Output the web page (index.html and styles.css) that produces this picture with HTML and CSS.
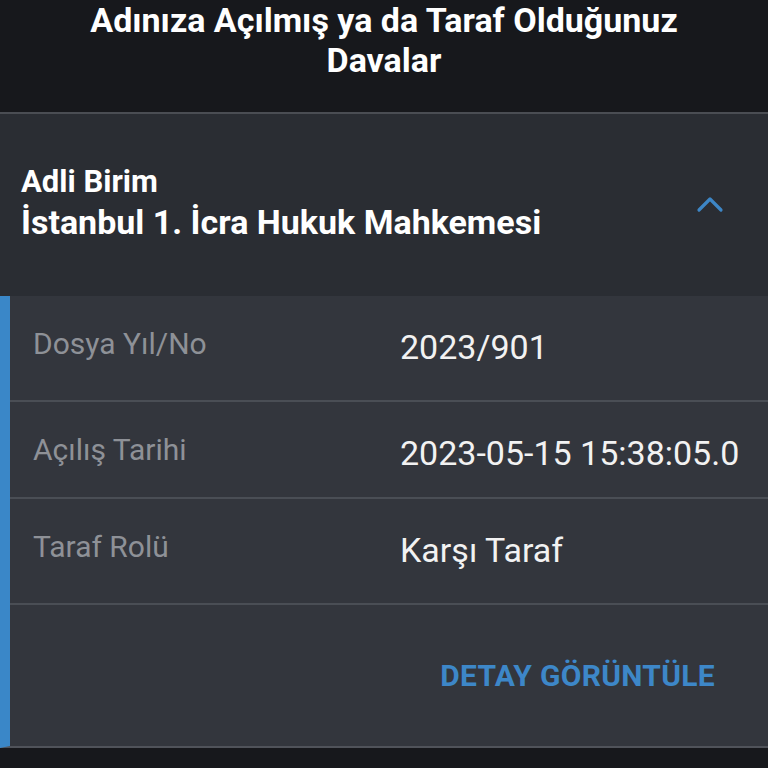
FILE: index.html
```html
<!DOCTYPE html>
<html lang="tr">
<head>
<meta charset="utf-8">
<link rel="stylesheet" href="styles.css">
</head>
<body>
<header class="topbar">
  <h1 class="title">Adınıza Açılmış ya da Taraf Olduğunuz Davalar</h1>
</header>
<section class="card">
  <div class="card-head">
    <div class="unit">
      <div class="unit-label">Adli Birim</div>
      <div class="unit-name">İstanbul 1. İcra Hukuk Mahkemesi</div>
    </div>
    <svg class="chevron" width="28" height="18" viewBox="0 0 28 18"><path d="M3 15 L14 4 L25 15" fill="none" stroke="#3d86c6" stroke-width="3.2" stroke-linecap="round" stroke-linejoin="round"/></svg>
  </div>
  <div class="card-body">
    <div class="row row-a">
      <div class="label">Dosya Yıl/No</div>
      <div class="value">2023/901</div>
    </div>
    <div class="row row-b">
      <div class="label">Açılış Tarihi</div>
      <div class="value">2023-05-15 15:38:05.0</div>
    </div>
    <div class="row row-a">
      <div class="label">Taraf Rolü</div>
      <div class="value">Karşı Taraf</div>
    </div>
    <div class="actions">
      <span class="action">DETAY GÖRÜNTÜLE</span>
    </div>
  </div>
</section>
</body>
</html>
```

FILE: styles.css
```css
html, body {
  margin: 0;
  padding: 0;
  background: #17181c;
  font-family: Roboto, "Noto Sans", "Liberation Sans", sans-serif;
  width: 768px;
  height: 768px;
  overflow: hidden;
}
.topbar {
  height: 112px;
  background: #17181c;
  display: flex;
  justify-content: center;
}
.title {
  margin: 0;
  width: 680px;
  text-align: center;
  color: #ffffff;
  font-size: 34px;
  font-weight: 700;
  line-height: 40px;
}
.card {
  border-top: 2px solid #4a4d53;
  background: #2a2d33;
}
.card-head {
  height: 182px;
  box-sizing: border-box;
  display: flex;
  align-items: center;
  justify-content: space-between;
  padding: 0 44px 4px 21px;
}
.unit-label {
  color: #ffffff;
  font-size: 31px;
  font-weight: 700;
  line-height: 38px;
}
.unit-name {
  color: #ffffff;
  font-size: 34px;
  font-weight: 700;
  line-height: 42px;
}
.chevron {
  display: block;
  margin-top: 2px;
}
.card-body {
  background: #33363d;
  border-left: 10px solid #3a87c8;
  border-bottom: 2px solid #50535a;
  height: 452px;
  box-sizing: border-box;
}
.row {
  display: grid;
  grid-template-columns: 367px 1fr;
  border-bottom: 2px solid #4a4e55;
  box-sizing: border-box;
  padding-left: 23px;
}
.row-a { height: 106px; padding-top: 30px; }
.row-b { height: 97px; padding-top: 30px; }
.label {
  color: #8e9197;
  font-size: 30px;
  line-height: 36px;
}
.value {
  color: #f2f2f2;
  font-size: 34px;
  line-height: 42px;
}
.actions {
  height: 141px;
  display: flex;
  align-items: center;
  justify-content: flex-end;
  padding-right: 53px;
}
.action {
  color: #3d87c8;
  font-size: 30px;
  font-weight: 700;
  letter-spacing: 0.3px;
}
```
